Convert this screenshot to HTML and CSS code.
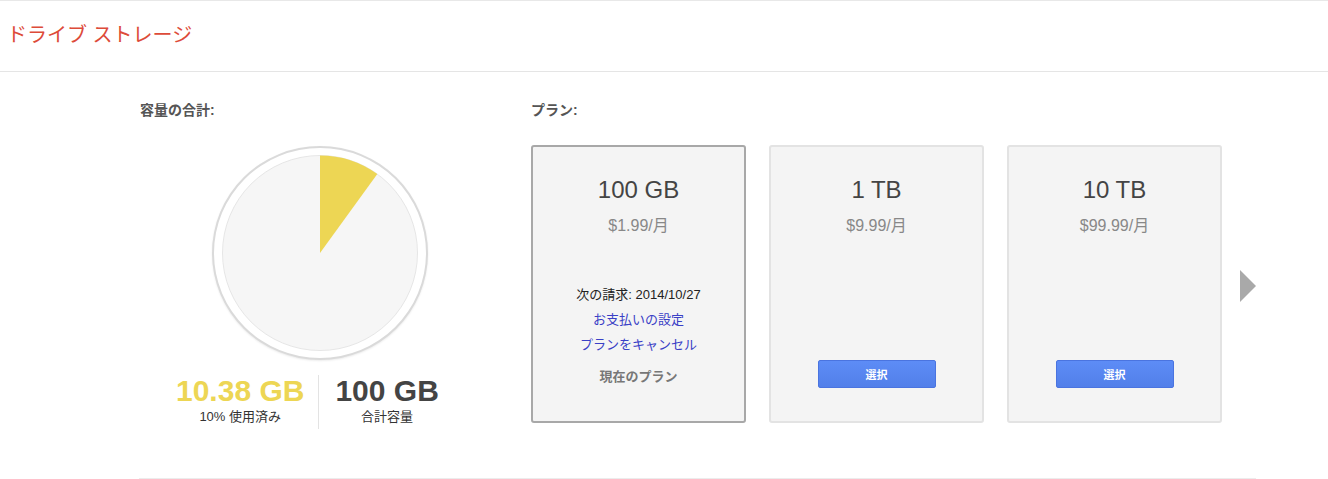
FILE: index.html
```html
<!DOCTYPE html>
<html lang="ja">
<head>
<meta charset="utf-8">
<title>ドライブ ストレージ</title>
<link rel="stylesheet" href="styles.css">
</head>
<body>
<header class="header">
  <h1 class="title">ドライブ ストレージ</h1>
</header>
<main class="main">
  <section class="total">
    <h2 class="label">容量の合計:</h2>
    <div class="pie-wrap">
      <div class="pie-ring">
        <svg class="pie" width="196" height="196" viewBox="0 0 196 196">
          <circle cx="98" cy="98" r="97.5" fill="#f6f6f6" stroke="#e6e6e6" stroke-width="1"/>
          <path d="M98 98 L98 0.5 A97.5 97.5 0 0 1 155.31 19.12 Z" fill="#edd654"/>
        </svg>
      </div>
    </div>
    <div class="stats">
      <div class="stat stat-used">
        <div class="stat-value used">10.38 GB</div>
        <div class="stat-label">10% 使用済み</div>
      </div>
      <div class="stat stat-total">
        <div class="stat-value">100 GB</div>
        <div class="stat-label">合計容量</div>
      </div>
    </div>
  </section>
  <section class="plans">
    <h2 class="label">プラン:</h2>
    <div class="plan-row">
      <div class="card current">
        <div class="card-size">100 GB</div>
        <div class="card-price">$1.99/月</div>
        <div class="next-bill">次の請求: 2014/10/27</div>
        <a class="link" href="#">お支払いの設定</a>
        <a class="link" href="#">プランをキャンセル</a>
        <div class="current-label">現在のプラン</div>
      </div>
      <div class="card">
        <div class="card-size">1 TB</div>
        <div class="card-price">$9.99/月</div>
        <button class="select">選択</button>
      </div>
      <div class="card">
        <div class="card-size">10 TB</div>
        <div class="card-price">$99.99/月</div>
        <button class="select">選択</button>
      </div>
      <div class="arrow"></div>
    </div>
  </section>
</main>
<div class="bottom-line"></div>
</body>
</html>
```

FILE: styles.css
```css
* { box-sizing: border-box; }
html, body { margin: 0; padding: 0; background: #fff; }
body {
  font-family: "Liberation Sans", Arial, "Noto Sans CJK JP", sans-serif;
  color: #333;
  border-top: 1px solid #e8e8e8;
}
.header {
  height: 71px;
  border-bottom: 1px solid #e5e5e5;
  display: flex;
  align-items: center;
  padding-left: 7px;
}
.title {
  margin: 0;
  font-size: 20px;
  font-weight: normal;
  color: #dd4b39;
  line-height: 24px;
  padding-bottom: 2px;
}
.main {
  display: flex;
  margin-left: 140px;
  width: 1116px;
  padding-top: 30px;
  height: 406px;
}
.label {
  margin: 0;
  font-size: 14px;
  font-weight: bold;
  line-height: 16px;
  color: #555;
}
.total { width: 391px; }
.pie-wrap {
  width: 360px;
  display: flex;
  justify-content: center;
  margin-top: 28px;
}
.pie-ring {
  width: 216px;
  height: 214px;
  border-radius: 50%;
  border: 2px solid #dadada;
  box-shadow: 0 1px 2px rgba(0,0,0,0.08);
  background: #fff;
  display: flex;
  align-items: center;
  justify-content: center;
}
.pie { display: block; }
.stats {
  display: flex;
  margin-left: 36px;
  margin-top: 15px;
}
.stat {
  display: flex;
  flex-direction: column;
  align-items: center;
  padding-top: 1px;
  height: 54px;
}
.stat-used { padding-right: 14px; }
.stat-total { padding-left: 16px; border-left: 1px solid #e3e3e3; }
.stat-value {
  font-size: 30px;
  font-weight: bold;
  line-height: 30px;
  color: #444;
}
.stat-value.used { color: #edd654; }
.stat-label {
  font-size: 13px;
  line-height: 16px;
  color: #333;
  margin-top: 3px;
}
.plans { flex: 1; }
.plan-row {
  display: flex;
  gap: 23px;
  margin-top: 27px;
  align-items: flex-start;
}
.card {
  width: 215px;
  height: 278px;
  background: #f4f4f4;
  border: 2px solid #e3e3e3;
  border-radius: 3px;
  display: flex;
  flex-direction: column;
  align-items: center;
  padding-top: 29px;
}
.card.current { border-color: #a8a8a8; }
.card-size {
  font-size: 24px;
  line-height: 28px;
  color: #444;
}
.card-price {
  font-size: 16px;
  line-height: 20px;
  color: #888;
  margin-top: 12px;
}
.next-bill {
  font-size: 13px;
  line-height: 20px;
  color: #222;
  margin-top: 49px;
}
.link {
  font-size: 13px;
  line-height: 20px;
  color: #3a40c6;
  text-decoration: none;
  margin-top: 5px;
}
.current-label {
  font-size: 13px;
  font-weight: bold;
  line-height: 20px;
  color: #777;
  margin-top: 12px;
}
.select {
  margin-top: 124px;
  width: 118px;
  height: 28px;
  border: 1px solid #4a74e0;
  border-radius: 2px;
  background: linear-gradient(#5d8cf6, #527fe9);
  color: #fff;
  font-family: "Liberation Sans", Arial, "Noto Sans CJK JP", sans-serif;
  font-size: 11px;
  font-weight: bold;
  padding: 0;
}
.arrow {
  width: 0;
  height: 0;
  border-top: 16px solid transparent;
  border-bottom: 16px solid transparent;
  border-left: 16px solid #a9a9a9;
  margin-top: 125px;
  margin-left: -5px;
}
.bottom-line {
  margin-left: 139px;
  width: 1117px;
  border-top: 1px solid #ececec;
}
```
